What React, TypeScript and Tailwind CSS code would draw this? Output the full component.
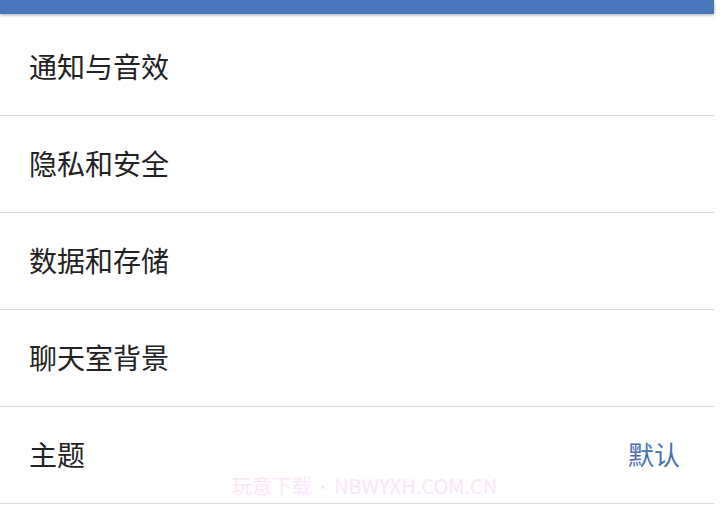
const items: { label: string; value?: string }[] = [
  { label: "通知与音效" },
  { label: "隐私和安全" },
  { label: "数据和存储" },
  { label: "聊天室背景" },
  { label: "主题", value: "默认" },
];

export default function App() {
  return (
    <div
      className="relative w-[726px] h-[509px] overflow-hidden bg-white"
      style={{ fontFamily: '"Noto Sans CJK SC", "Noto Sans", sans-serif' }}
    >
      <div className="w-[714px]">
        <div className="h-[14px] bg-[#4a76be] shadow-[0_1px_3px_rgba(0,0,0,0.35)]" />
        <div className="pt-[5px]">
          {items.map((item) => (
            <div
              key={item.label}
              className="flex items-center justify-between h-[97px] border-b border-[#d9d9d9] pl-[29px] pr-[34px]"
            >
              <span className="text-[28px] leading-none text-[#222222] -translate-y-[1px]">{item.label}</span>
              {item.value && (
                <span className="text-[26px] leading-none text-[#4a70b6] -translate-y-[1px]">{item.value}</span>
              )}
            </div>
          ))}
        </div>
      </div>
      <div className="absolute left-[232px] top-[476px] flex items-center text-[20px] leading-none text-[#fbe6f8] whitespace-nowrap">
        <span>玩意下载</span>
        <span className="mx-[3px] text-[16px]">•</span>
        <span>NBWYXH.COM.CN</span>
      </div>
    </div>
  );
}
